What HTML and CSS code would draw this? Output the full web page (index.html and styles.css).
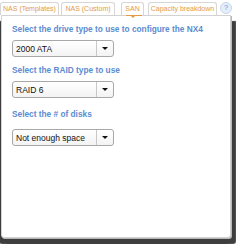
FILE: index.html
```html
<!DOCTYPE html>
<html>
<head>
<meta charset="utf-8">
<link rel="stylesheet" href="styles.css">
</head>
<body>
<div class="frame">
  <div class="tabs">
    <div class="tab t1">NAS (Templates)</div>
    <div class="tab t2">NAS (Custom)</div>
    <div class="tab t3 active">SAN</div>
    <div class="tab t4">Capacity breakdown</div>
    <div class="help">?</div>
  </div>
  <div class="panel">
    <div class="heading h1">Select the drive type to use to configure the NX4</div>
    <div class="select"><span class="value">2000 ATA</span><span class="arrow"></span></div>
    <div class="heading h2">Select the RAID type to use</div>
    <div class="select"><span class="value">RAID 6</span><span class="arrow"></span></div>
    <div class="heading h3">Select the # of disks</div>
    <div class="select"><span class="value">Not enough space</span><span class="arrow"></span></div>
  </div>
</div>
</body>
</html>
```

FILE: styles.css
```css
html, body {
  margin: 0;
  padding: 0;
  background: #ffffff;
}
.frame {
  width: 236px;
  height: 244px;
  overflow: hidden;
  font-family: "Liberation Sans", Arial, sans-serif;
}
.tabs {
  display: flex;
  align-items: flex-end;
  height: 13px;
  margin-top: 2px;
  padding-left: 0;
}
.tab {
  position: relative;
  box-sizing: border-box;
  height: 13px;
  border: 1px solid #d6d6d6;
  border-bottom: none;
  border-radius: 3px 3px 0 0;
  background: #ffffff;
  color: #e49a45;
  font-size: 7px;
  line-height: 12px;
  text-align: center;
  white-space: nowrap;
}
.t1 { width: 59px; margin-left: 0; }
.t2 { width: 54px; margin-left: 2px; }
.t3 { width: 23px; margin-left: 6px; }
.t4 { width: 69px; margin-left: 4px; }
.active::after {
  content: "";
  position: absolute;
  left: 4px;
  right: 1px;
  bottom: -1px;
  height: 1px;
  background: #e49a45;
}
.active::before {
  content: "";
  position: absolute;
  left: 9px;
  bottom: -3px;
  border-left: 2px solid transparent;
  border-right: 2px solid transparent;
  border-top: 2px solid #e49a45;
  z-index: 2;
}
.help {
  box-sizing: border-box;
  width: 12px;
  height: 12px;
  margin-left: 3px;
  margin-bottom: 2px;
  border-radius: 50%;
  border: 1px solid #c4d6ee;
  background: #e6eefa;
  color: #6f9bd6;
  font-size: 8px;
  line-height: 10px;
  text-align: center;
  align-self: center;
}
.panel {
  box-sizing: border-box;
  width: 230px;
  height: 223px;
  margin-left: 1px;
  padding: 0 0 0 10px;
  border: 1px solid #d2d2d2;
  border-radius: 0 0 3px 3px;
  background: #ffffff;
  display: flex;
  flex-direction: column;
  align-items: flex-start;
  box-shadow: 1px 1px 0 #b8b8b8, 5px 6px 1px #3e3e3e, -2px 6px 1px #3e3e3e;
}
.heading {
  color: #5b8cd2;
  font-weight: bold;
  font-size: 8.3px;
  line-height: 10px;
  white-space: nowrap;
}
.h1 { margin-top: 8px; }
.h2 { margin-top: 8px; }
.h3 { margin-top: 11px; }
.select {
  box-sizing: border-box;
  width: 102px;
  height: 17px;
  margin-top: 6px;
  border: 1px solid #a8a8a8;
  border-radius: 3px;
  background: linear-gradient(#ffffff, #f3f3f3);
  display: flex;
  align-items: center;
  font-size: 8.5px;
  color: #111111;
}
.h3 + .select { margin-top: 10px; }
.value {
  flex: 1;
  padding-left: 3px;
  white-space: nowrap;
}
.arrow {
  width: 16px;
  height: 15px;
  border-left: 1px solid #c8c8c8;
  display: flex;
  align-items: center;
  justify-content: center;
}
.arrow::after {
  content: "";
  border-left: 3px solid transparent;
  border-right: 3px solid transparent;
  border-top: 3px solid #111111;
}
```
